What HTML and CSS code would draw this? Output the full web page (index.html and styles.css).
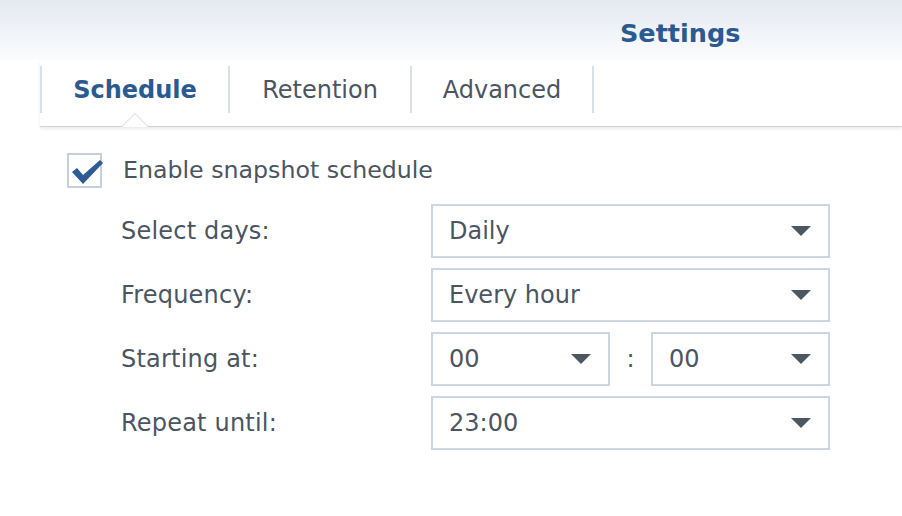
FILE: index.html
```html
<!DOCTYPE html>
<html>
<head>
<meta charset="utf-8">
<link rel="stylesheet" href="styles.css">
</head>
<body>
<div class="header"><h1 class="title">Settings</h1></div>
<div class="tabbar">
  <div class="tab tab-active">Schedule<span class="notch"></span></div>
  <div class="tab tab-r">Retention</div>
  <div class="tab tab-a">Advanced</div>
</div>
<div class="content">
  <label class="check-row">
    <span class="checkbox">
      <svg width="34" height="26" viewBox="0 0 34 26"><path d="M2 13 L7 9 L13 16 L30 1 L33 4 L13 25 Z" fill="#2d5b96"/></svg>
    </span>
    <span class="check-label">Enable snapshot schedule</span>
  </label>
  <div class="form">
    <div class="label">Select days:</div>
    <div class="select"><span>Daily</span><i class="arrow"></i></div>
    <div class="label">Frequency:</div>
    <div class="select"><span>Every hour</span><i class="arrow"></i></div>
    <div class="label">Starting at:</div>
    <div class="time">
      <div class="select"><span>00</span><i class="arrow"></i></div>
      <span class="colon">:</span>
      <div class="select"><span>00</span><i class="arrow"></i></div>
    </div>
    <div class="label">Repeat until:</div>
    <div class="select"><span>23:00</span><i class="arrow"></i></div>
  </div>
</div>
</body>
</html>
```
FILE: styles.css
```css
html, body { margin: 0; padding: 0; }
body {
  background: #ffffff;
  font-family: "DejaVu Sans", Verdana, sans-serif;
  color: #4b5562;
  width: 902px;
  height: 516px;
  overflow: hidden;
}
.header {
  height: 60px;
  background: linear-gradient(#e4e9f1, #fbfcfd 100%);
  display: flex;
  align-items: flex-start;
  padding-left: 620px;
  box-sizing: border-box;
}
.title {
  margin: 18px 0 0 0;
  font-size: 25.5px;
  font-weight: bold;
  color: #2b5a91;
  letter-spacing: 0;
}
.tabbar {
  margin-left: 40px;
  height: 67px;
  box-sizing: border-box;
  padding-top: 6px;
  display: flex;
  align-items: flex-start;
  border-bottom: 1px solid #cfd3d8;
  box-shadow: 0 2px 3px rgba(0,0,0,0.08);
  position: relative;
}
.tab {
  position: relative;
  height: 47px;
  border-left: 2px solid #d8e1ea;
  display: flex;
  align-items: center;
  justify-content: center;
  font-size: 24px;
  color: #4b5562;
  box-sizing: border-box;
}
.tab-active { width: 188px; font-weight: bold; color: #2b5a91; }
.tab-r { width: 182px; }
.tab-a { border-right: 2px solid #d8e1ea; width: 184px; }
.notch {
  position: absolute;
  left: 79px;
  top: 47px;
  width: 0; height: 0;
  border-left: 14px solid transparent;
  border-right: 14px solid transparent;
  border-bottom: 14px solid #cfd3d8;
}
.notch::after {
  content: "";
  position: absolute;
  left: -13px;
  top: 1px;
  border-left: 13px solid transparent;
  border-right: 13px solid transparent;
  border-bottom: 13px solid #ffffff;
}
.content {
  padding: 25px 0 0 67px;
}
.check-row {
  display: flex;
  align-items: center;
  height: 36px;
}
.checkbox {
  position: relative;
  width: 31px;
  height: 31px;
  border: 2px solid #c5d0dc;
  background: #fff;
  flex: none;
}
.checkbox svg {
  position: absolute;
  left: 1px;
  top: 4px;
}
.check-label {
  margin-left: 21px;
  font-size: 23.7px;
  color: #4b5562;
}
.form {
  margin-top: 16px;
  margin-left: 54px;
  display: grid;
  grid-template-columns: 310px 399px;
  row-gap: 10px;
  align-items: center;
}
.label {
  font-size: 24px;
  letter-spacing: 0.2px;
  color: #4b5562;
}
.select {
  height: 54px;
  border: 2px solid #cbd6e0;
  box-sizing: border-box;
  display: flex;
  align-items: center;
  justify-content: space-between;
  padding: 0 17px 0 16px;
  font-size: 24px;
  color: #4b5562;
  background: #fff;
}
.arrow {
  width: 0; height: 0;
  border-left: 10px solid transparent;
  border-right: 10px solid transparent;
  border-top: 10px solid #4d5761;
}
.time {
  display: flex;
  align-items: center;
}
.time .select { width: 179px; }
.colon {
  width: 41px;
  text-align: center;
  font-size: 24px;
}
```
